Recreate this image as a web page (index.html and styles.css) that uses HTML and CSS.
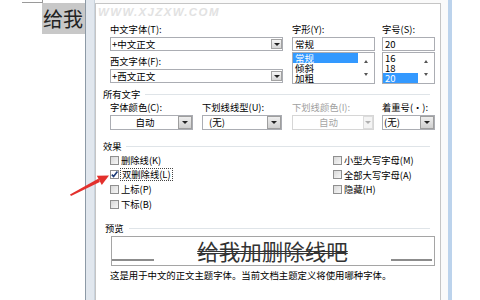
FILE: index.html
```html
<!DOCTYPE html>
<html lang="zh-CN">
<head>
    <meta charset="UTF-8">
    <meta name="viewport" content="width=device-width, initial-scale=1.0">
    <title>字体</title>
    <link rel="stylesheet" href="styles.css">
</head>
<body>
<div class="screen">
    <div class="doc">
        <div class="doc-caret"></div>
        <div class="doc-sel">给我</div>
    </div>

    <div class="dialog">
        <div class="panel">
            <div class="watermark">WWW.XJZXW.COM</div>

            <div class="font-row">
                <div class="col col-face">
                    <div class="lbl">中文字体(T):</div>
                    <div class="combo"><span class="combo-text">+中文正文</span><span class="combo-btn"></span></div>
                    <div class="lbl lbl-gap">西文字体(F):</div>
                    <div class="combo"><span class="combo-text">+西文正文</span><span class="combo-btn"></span></div>
                </div>
                <div class="col col-style">
                    <div class="lbl">字形(Y):</div>
                    <div class="field">常规</div>
                    <div class="listbox">
                        <ul class="items">
                            <li class="sel">常规</li>
                            <li>倾斜</li>
                            <li>加粗</li>
                        </ul>
                        <div class="scroll"><span class="up"></span><span class="down"></span></div>
                    </div>
                </div>
                <div class="col col-size">
                    <div class="lbl">字号(S):</div>
                    <div class="field">20</div>
                    <div class="listbox">
                        <ul class="items">
                            <li>16</li>
                            <li>18</li>
                            <li class="sel">20</li>
                        </ul>
                        <div class="scroll"><span class="up"></span><span class="down"></span></div>
                    </div>
                </div>
            </div>

            <div class="group">所有文字</div>
            <div class="color-row">
                <div class="cc cc-color">
                    <div class="lbl">字体颜色(C):</div>
                    <div class="drop"><span class="drop-text center">自动</span><span class="drop-btn"></span></div>
                </div>
                <div class="cc cc-uline">
                    <div class="lbl">下划线线型(U):</div>
                    <div class="drop"><span class="drop-text pad">(无)</span><span class="drop-btn"></span></div>
                </div>
                <div class="cc cc-ucolor">
                    <div class="lbl off">下划线颜色(I):</div>
                    <div class="drop drop-off"><span class="drop-text center">自动</span><span class="drop-btn"></span></div>
                </div>
                <div class="cc cc-emph">
                    <div class="lbl">着重号(·):</div>
                    <div class="drop"><span class="drop-text">(无)</span><span class="drop-btn"></span></div>
                </div>
            </div>

            <div class="group group-fx">效果</div>
            <div class="effects">
                <div class="fx-col fx-left">
                    <div class="chk"><span class="box"></span>删除线(K)</div>
                    <div class="chk"><span class="box checked"><svg viewBox="0 0 9 9" width="9" height="9"><polyline points="1.8,4.6 3.6,6.6 7.4,1.6" fill="none" stroke="#1d3c78" stroke-width="1.6"/></svg></span><span class="focus">双删除线(L)</span></div>
                    <div class="chk"><span class="box"></span>上标(P)</div>
                    <div class="chk"><span class="box"></span>下标(B)</div>
                </div>
                <div class="fx-col">
                    <div class="chk"><span class="box"></span>小型大写字母(M)</div>
                    <div class="chk"><span class="box"></span>全部大写字母(A)</div>
                    <div class="chk"><span class="box"></span>隐藏(H)</div>
                </div>
            </div>

            <div class="group group-pv">预览</div>
            <div class="preview">
                <span class="pv-line"></span>
                <span class="pv-text">给我加删除线吧</span>
                <span class="pv-line pv-line-r"></span>
            </div>
            <div class="caption">这是用于中文的正文主题字体。当前文档主题定义将使用哪种字体。</div>
        </div>
    </div>

    <div class="outside"></div>

    <svg class="arrow" viewBox="0 0 480 300" width="480" height="300">
        <polygon points="70,194.5 71,196 99.8,182 98.6,178.6" fill="#e3302c"/>
        <polygon points="109,175.5 101.8,185 96.8,175.8" fill="#e3302c"/>
    </svg>
</div>
</body>
</html>
```

FILE: styles.css
```css
body {
    margin: 0;
    background: #fff;
    font-family: "Noto Sans CJK SC", "Noto Sans", sans-serif;
    color: #000;
}
.screen {
    width: 480px;
    height: 300px;
    display: flex;
    overflow: hidden;
    position: relative;
}
.doc {
    width: 85px;
    flex: none;
}
.doc-caret {
    margin-left: 22px;
    width: 20px;
    height: 2px;
    border-bottom: 1px solid #9a9a9a;
    border-right: 1px solid #9a9a9a;
}
.doc-sel {
    margin-left: 42px;
    padding-left: 1px;
    background: #c8c8c8;
    color: #222;
    font-size: 20px;
    line-height: 31px;
    white-space: nowrap;
}
.dialog {
    flex: none;
    border-left: 1px solid #8d9aa6;
    border-right: 4px solid #bcd3ec;
    box-shadow: 1px 0 0 #47637f;
    padding: 3px 7px 0 9px;
    background: linear-gradient(to right, #e1e7ee 0, #e1e7ee 8px, #c9d3dd 8px, #c9d3dd 9px, #fafafa 9px);
}
.panel {
    width: 346px;
    height: 297px;
    box-sizing: border-box;
    border: 1px solid #c5c5c5;
    border-bottom: none;
    background: #fff;
    padding: 0 5px 0 7px;
}
.watermark {
    height: 19px;
    line-height: 16px;
    margin-left: -5px;
    font-family: "Liberation Sans", sans-serif;
    font-size: 11.5px;
    font-weight: bold;
    font-style: italic;
    letter-spacing: 1.4px;
    color: #e2e2e2;
}
.lbl {
    font-size: 9.3px;
    line-height: 13px;
    height: 13px;
    white-space: nowrap;
}
.lbl.off {
    color: #a0a0a0;
}
.lbl-gap {
    margin-top: 4px;
}

/* font / style / size */
.font-row {
    display: flex;
    margin-left: 7px;
    height: 60px;
}
.col-face {
    width: 173px;
    margin-right: 9px;
}
.col-style {
    width: 83px;
    margin-right: 7px;
}
.col-size {
    width: 53px;
}
.combo, .field {
    margin-top: 1px;
    height: 14px;
    box-sizing: border-box;
    border: 1px solid #abadb3;
    display: flex;
    align-items: center;
}
.combo-text, .field {
    font-size: 9.5px;
    line-height: 12px;
    padding-left: 2px;
}
.combo-text {
    flex: 1;
    padding-left: 1px;
}
.combo-btn {
    width: 11px;
    height: 10px;
    box-sizing: border-box;
    border: 1px solid #a3a3a3;
    background: linear-gradient(#f6f6f6, #d6d6d6);
    display: flex;
    align-items: center;
    justify-content: center;
}
.combo-btn::after, .drop-btn::after {
    content: "";
    border-top: 3px solid #222;
    border-left: 3px solid transparent;
    border-right: 3px solid transparent;
}
.listbox {
    margin-top: 1px;
    height: 32px;
    box-sizing: border-box;
    border: 1px solid #abadb3;
    display: flex;
}
.items {
    flex: 1;
    margin: 0;
    padding: 0;
    list-style: none;
    font-size: 9.5px;
    line-height: 10px;
}
.items li {
    padding-left: 2px;
    height: 10px;
}
.items li.sel {
    background: #3399ff;
    color: #fff;
}
.scroll {
    width: 16px;
    display: flex;
    flex-direction: column;
    align-items: center;
    justify-content: space-between;
    padding: 7px 0 7px;
    box-sizing: border-box;
}
.scroll .up {
    border-bottom: 3px solid #555;
    border-left: 2.5px solid transparent;
    border-right: 2.5px solid transparent;
}
.scroll .down {
    border-top: 3px solid #555;
    border-left: 2.5px solid transparent;
    border-right: 2.5px solid transparent;
}

/* group headers */
.group {
    display: flex;
    align-items: center;
    height: 12px;
    font-size: 9.3px;
    line-height: 12px;
    margin-top: 5px;
}
.group::after {
    content: "";
    flex: 1;
    border-top: 1px solid #dfe4e8;
    margin: 1px 5px 0 5px;
}
.group-fx {
    margin-top: 10px;
}
.group-fx::after {
    margin-left: 4px;
}
.group-pv {
    margin-top: 11px;
    padding-left: 2px;
}

/* colour row */
.color-row {
    display: flex;
    margin-left: 7px;
    margin-top: 1px;
}
.cc {
    flex: none;
}
.cc-color {
    width: 83px;
    margin-right: 9px;
}
.cc-uline {
    width: 80px;
    margin-right: 10px;
}
.cc-ucolor {
    width: 82px;
    margin-right: 8px;
}
.cc-emph {
    width: 53px;
}
.drop {
    margin-top: 1px;
    height: 15px;
    box-sizing: border-box;
    border: 1px solid #abadb3;
    display: flex;
}
.drop-text {
    flex: 1;
    font-size: 9.5px;
    line-height: 13px;
    padding-left: 1px;
}
.drop-text.center {
    text-align: center;
}
.drop-text.pad {
    padding-left: 6px;
}
.drop-btn {
    width: 12px;
    border: 1px solid #9e9e9e;
    margin: 0;
    background: linear-gradient(#eeeeee, #cfcfcf);
    display: flex;
    align-items: center;
    justify-content: center;
}
.drop-off {
    border-color: #d6d6d6;
}
.drop-off .drop-text {
    color: #a6a6a6;
}
.drop-off .drop-btn {
    width: 8px;
    border-color: #dcdcdc;
    background: #f4f4f4;
}
.drop-off .drop-btn::after {
    border-top-color: #b0b0b0;
}

/* effects */
.effects {
    display: flex;
    margin-left: 7px;
    margin-top: 1px;
}
.fx-left {
    width: 223px;
}
.chk {
    display: flex;
    align-items: center;
    height: 14.6px;
    font-size: 9.3px;
    line-height: 12px;
    white-space: nowrap;
}
.box {
    width: 9px;
    height: 9px;
    box-sizing: border-box;
    border: 1px solid #8f8f8f;
    background: linear-gradient(135deg, #d8d8d8, #f7f7f7);
    margin-right: 2px;
    display: flex;
}
.box svg {
    margin: -1px;
}
.box.checked {
    background: #fff;
}
.focus {
    outline: 1px dotted #444;
    padding: 0 1px;
    line-height: 11px;
}

/* preview */
.preview {
    margin: 2px 0 0 8px;
    width: 324px;
    height: 30px;
    box-sizing: border-box;
    border: 1px solid #a5a5a5;
    display: flex;
    align-items: flex-end;
}
.pv-line {
    width: 42px;
    height: 2px;
    background: #8c8c8c;
    margin-bottom: 4px;
}
.pv-line-r {
    width: 41px;
    margin-right: 2px;
}
.pv-text {
    flex: 1;
    text-align: center;
    align-self: center;
    font-size: 21.5px;
    line-height: 28px;
    color: #333;
    text-decoration: line-through double #333;
    text-decoration-thickness: 1px;
}
.caption {
    margin: 3px 0 0 7px;
    font-size: 9.4px;
    line-height: 12px;
    white-space: nowrap;
}
.outside {
    flex: 1;
    background: #fff;
}
.arrow {
    position: absolute;
    left: 0;
    top: 0;
    pointer-events: none;
}
```
